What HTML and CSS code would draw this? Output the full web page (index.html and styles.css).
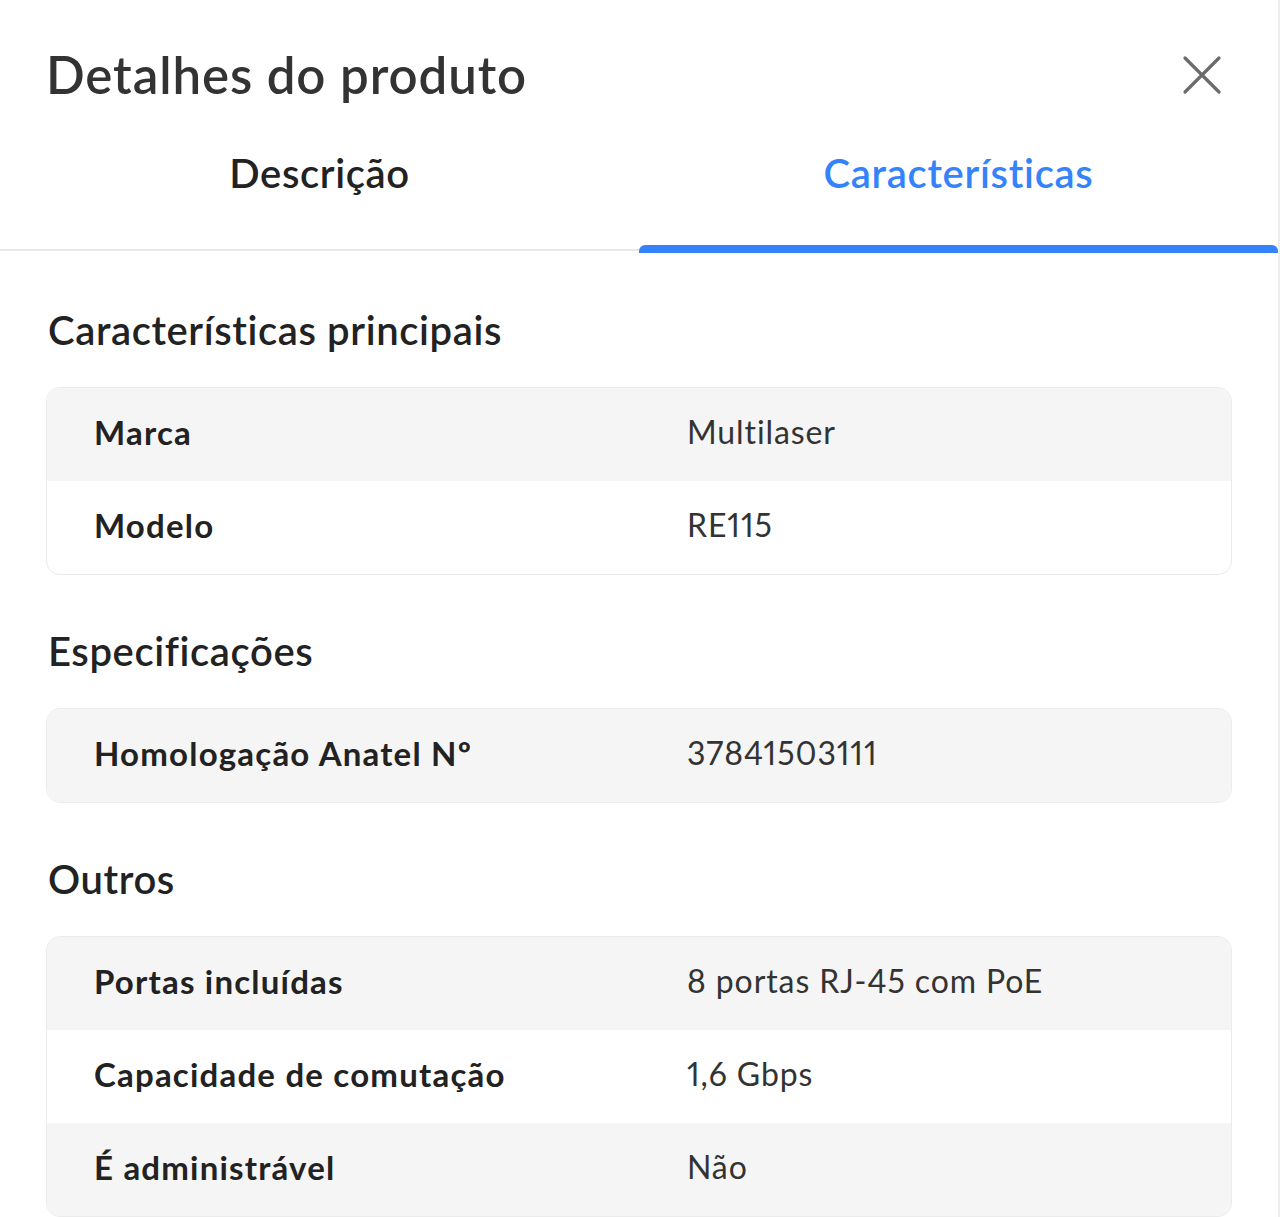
FILE: index.html
```html
<!DOCTYPE html>
<html>
<head>
<meta charset="utf-8">
<title>Detalhes do produto</title>
<link rel="stylesheet" href="styles.css">
</head>
<body>
	<div id="modal">

		<div class="modal-head">
			<h1 class="modal-title">Detalhes do produto</h1>
			<div class="close-btn">
				<svg width="40" height="40" viewBox="0 0 40 40">
					<path d="M3 3 L37 37 M37 3 L3 37" stroke="#6b6b6b" stroke-width="3.2" stroke-linecap="round" fill="none"/>
				</svg>
			</div>
		</div>

		<div class="tabs">
			<div class="tab">Descrição</div>
			<div class="tab tab-active">Características</div>
		</div>

		<div class="content">

			<h2 class="section-title">Características principais</h2>
			<div class="spec-table">
				<div class="spec-row">
					<div class="spec-label">Marca</div>
					<div class="spec-value">Multilaser</div>
				</div>
				<div class="spec-row">
					<div class="spec-label">Modelo</div>
					<div class="spec-value">RE115</div>
				</div>
			</div>

			<h2 class="section-title">Especificações</h2>
			<div class="spec-table">
				<div class="spec-row">
					<div class="spec-label">Homologação Anatel Nº</div>
					<div class="spec-value">37841503111</div>
				</div>
			</div>

			<h2 class="section-title">Outros</h2>
			<div class="spec-table">
				<div class="spec-row">
					<div class="spec-label">Portas incluídas</div>
					<div class="spec-value">8 portas RJ-45 com PoE</div>
				</div>
				<div class="spec-row">
					<div class="spec-label">Capacidade de comutação</div>
					<div class="spec-value">1,6 Gbps</div>
				</div>
				<div class="spec-row">
					<div class="spec-label">É administrável</div>
					<div class="spec-value">Não</div>
				</div>
			</div>

		</div>
	</div>
</body>
</html>
```

FILE: styles.css
```css
html,body{
	margin: 0px;
	padding: 0px;
}

body{
	background-color: #FFF;
	font-family: Lato, "Noto Sans", sans-serif;
	color: #333;
	overflow: hidden;
	font-variant-numeric: proportional-nums;
}

#modal{
	width: 1280px;
	border-right: 2px solid #EEE;
	box-sizing: border-box;
}

.modal-head{
	display: flex;
	justify-content: space-between;
	align-items: center;
	height: 148px;
	padding: 0px 56px 0px 46px;
	box-sizing: border-box;
}

.modal-title{
	margin: 0px;
	font-size: 51px;
	font-weight: 600;
	color: #333;
	letter-spacing: 0.9px;
}

.close-btn{
	width: 40px;
	height: 40px;
	margin-top: 2px;
}

.tabs{
	display: flex;
	height: 101px;
	border-bottom: 2px solid #E8E8E8;
	box-sizing: content-box;
}

.tab{
	flex: 1;
	position: relative;
	text-align: center;
	font-size: 40px;
	font-weight: 600;
	color: #222;
	line-height: 50px;
	letter-spacing: 0.6px;
}

.tab-active{
	color: #3483FA;
	letter-spacing: 0.7px;
}

.tab-active:after{
	content: "";
	position: absolute;
	left: 0px;
	right: 0px;
	bottom: -4px;
	height: 8px;
	background-color: #3483FA;
	border-radius: 6px 6px 0px 0px;
}

.content{
	padding: 54px 46px 0px 46px;
}

.section-title{
	margin: 0px 0px 32px 2px;
	font-size: 40px;
	font-weight: 600;
	line-height: 50px;
	color: #222;
	letter-spacing: 0.6px;
}

.spec-table{
	border: 1px solid #EBEBEB;
	border-radius: 14px;
	overflow: hidden;
	margin-bottom: 51px;
}

.spec-row{
	display: flex;
	align-items: center;
	height: 93px;
	padding-bottom: 6px;
	box-sizing: border-box;
	font-size: 33px;
	color: #222;
}

.spec-row:nth-child(odd){
	background-color: #F5F5F5;
}

.spec-label{
	width: 640px;
	padding-left: 47px;
	box-sizing: border-box;
	font-weight: 700;
	letter-spacing: 1.2px;
}

.spec-value{
	flex: 1;
	font-size: 32px;
	color: #333;
	letter-spacing: 0.9px;
}
```
